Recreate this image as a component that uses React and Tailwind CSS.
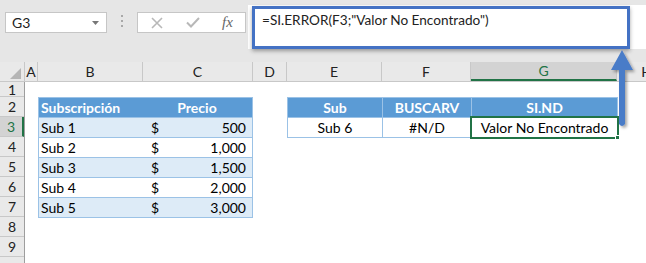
import React from "react";

const cols = [
  { k: "A", w: 13 },
  { k: "B", w: 105 },
  { k: "C", w: 110 },
  { k: "D", w: 34 },
  { k: "E", w: 95 },
  { k: "F", w: 89 },
  { k: "G", w: 146 },
  { k: "H", w: 60 },
];

const rowsH = [15, 20, 20, 20, 20, 20, 20, 20, 20, 20];

const t1 = [
  ["Sub 1", "500"],
  ["Sub 2", "1,000"],
  ["Sub 3", "1,500"],
  ["Sub 4", "2,000"],
  ["Sub 5", "3,000"],
];

function Toolbar() {
  return (
    <div className="h-[62px] bg-[#e6e6e6] flex items-start relative">
      <div className="ml-[5px] mt-[12px] w-[102px] h-[21px] bg-white border border-[#c6c6c6] flex items-center justify-between pl-[6px] pr-[7px]">
        <span className="text-[14px] text-[#222] leading-none">G3</span>
        <svg width="7" height="4" viewBox="0 0 7 4">
          <path d="M0 0 L7 0 L3.5 4 Z" fill="#777" />
        </svg>
      </div>
      <div className="ml-[14px] mt-[15px] w-[2px] flex flex-col gap-[3px]">
        <div className="w-[2px] h-[2px] bg-[#a8a8a8]" />
        <div className="w-[2px] h-[2px] bg-[#a8a8a8]" />
        <div className="w-[2px] h-[2px] bg-[#a8a8a8]" />
      </div>
      <div className="ml-[14px] mt-[12px] w-[109px] h-[21px] bg-white border border-[#c6c6c6] flex items-center">
        <svg className="ml-[13px]" width="12" height="12" viewBox="0 0 12 12">
          <path d="M1 1 L11 11 M11 1 L1 11" stroke="#b8b8b8" strokeWidth="1.6" />
        </svg>
        <svg className="ml-[23px]" width="14" height="11" viewBox="0 0 14 11">
          <path d="M1 5.5 L5 9.5 L13 1" stroke="#b8b8b8" strokeWidth="2" fill="none" />
        </svg>
        <span className="ml-[22px] text-[15px] italic text-[#666] leading-none" style={{ fontFamily: '"Liberation Serif", serif' }}>
          fx
        </span>
      </div>
      <div className="ml-[2px] mt-[5px] flex-1 h-[44px] bg-white relative">
        <div className="absolute left-[4px] top-[1px] w-[378px] h-[43px] border-[3px] border-[#4472c4] shadow-[0_2px_4px_rgba(0,0,0,0.35)]" />
        <div className="absolute left-[14px] top-[9px] text-[13.6px] text-[#222] whitespace-nowrap leading-none">
          =SI.ERROR(F3;"Valor No Encontrado")
        </div>
      </div>
    </div>
  );
}

function ColHeaders() {
  return (
    <div className="flex h-[20px] bg-[#e9e9e9] border-b border-[#c8c8c8]">
      <div className="w-[25px] h-full relative border-r border-[#c8c8c8] shrink-0">
        <svg className="absolute right-[3px] bottom-[2px]" width="11" height="11" viewBox="0 0 11 11">
          <path d="M11 0 L11 11 L0 11 Z" fill="#b5b5b5" />
        </svg>
      </div>
      {cols.map((c) => {
        const sel = c.k === "G";
        return (
          <div
            key={c.k}
            style={{ width: c.w }}
            className={
              "h-full flex items-center justify-center text-[14px] shrink-0 " +
              (sel
                ? "bg-[#d3d3d3] text-[#217346] border-b-2 border-b-[#217346] border-r border-r-[#c8c8c8]"
                : "text-[#222] border-r border-[#c8c8c8]")
            }
          >
            {c.k}
          </div>
        );
      })}
    </div>
  );
}

function Table1() {
  return (
    <div className="w-[215px] border border-[#9bc2e6] flex flex-col">
      <div className="h-[19px] bg-[#5b9bd5] flex items-center text-white font-bold text-[14px]">
        <div className="w-[105px] pl-[2px]">Subscripción</div>
        <div className="flex-1 text-center pr-[2px]">Precio</div>
      </div>
      {t1.map((r, i) => (
        <div
          key={i}
          className={
            "h-[20px] border-t border-[#9bc2e6] flex items-center text-[14px] text-black " +
            (i % 2 === 0 ? "bg-[#ddebf7]" : "bg-white")
          }
        >
          <div className="w-[105px] pl-[2px]">{r[0]}</div>
          <div className="flex-1 flex justify-between pl-[7px] pr-[6px]">
            <span>$</span>
            <span>{r[1]}</span>
          </div>
        </div>
      ))}
    </div>
  );
}

function Table2() {
  return (
    <div className="w-[331px] border border-[#9bc2e6] flex flex-col relative">
      <div className="h-[19px] bg-[#5b9bd5] flex items-center text-white font-bold text-[14px]">
        <div className="w-[95px] border-r border-[#9bc2e6] h-full flex items-center justify-center">Sub</div>
        <div className="w-[89px] border-r border-[#9bc2e6] h-full flex items-center justify-center">BUSCARV</div>
        <div className="flex-1 h-full flex items-center justify-center">SI.ND</div>
      </div>
      <div className="h-[20px] border-t border-[#9bc2e6] flex items-center text-[14px] text-black bg-white">
        <div className="w-[95px] border-r border-[#9bc2e6] h-full flex items-center justify-center">Sub 6</div>
        <div className="w-[89px] border-r border-[#9bc2e6] h-full flex items-center justify-center">#N/D</div>
        <div className="flex-1 h-full flex items-center justify-center relative">
          Valor No Encontrado
          <div className="absolute -left-[2px] -top-[2px] -right-[2px] -bottom-[2px] border-2 border-[#217346]" />
          <div className="absolute -right-[3px] -bottom-[3px] w-[5px] h-[5px] bg-[#217346] border border-white" />
        </div>
      </div>
    </div>
  );
}

export default function App() {
  return (
    <div className="w-[646px] h-[263px] bg-white overflow-hidden relative" style={{ fontFamily: 'Lato, "Noto Sans", sans-serif' }}>
      <Toolbar />
      <ColHeaders />
      <div className="flex">
        <div className="w-[25px] bg-[#e9e9e9] border-r border-[#9e9e9e] flex flex-col shrink-0">
          {rowsH.map((h, i) => {
            const sel = i === 2;
            return (
              <div
                key={i}
                style={{ height: h }}
                className={
                  "flex items-center justify-center text-[14px] border-b border-[#c8c8c8] shrink-0 " +
                  (sel ? "bg-[#d3d3d3] text-[#217346] border-r-2 border-r-[#217346]" : "text-[#222]")
                }
              >
                {i < 9 ? i + 1 : ""}
              </div>
            );
          })}
        </div>
        <div className="flex-1 flex flex-col">
          <div className="h-[15px]" />
          <div className="flex items-start">
            <div className="w-[13px]" />
            <Table1 />
            <div className="w-[34px]" />
            <Table2 />
          </div>
        </div>
      </div>
      <svg className="absolute left-[608px] top-[46px]" width="32" height="86" viewBox="0 0 32 86">
        <defs>
          <filter id="sh" x="-50%" y="-20%" width="200%" height="140%">
            <feDropShadow dx="2" dy="2" stdDeviation="1.5" floodColor="#000" floodOpacity="0.35" />
          </filter>
        </defs>
        <g filter="url(#sh)">
          <path d="M14 4 L25 24 L17 24 L17 78 Q14 82 11 78 L11 24 L3 24 Z" fill="#4a7bc8" />
        </g>
      </svg>
    </div>
  );
}
